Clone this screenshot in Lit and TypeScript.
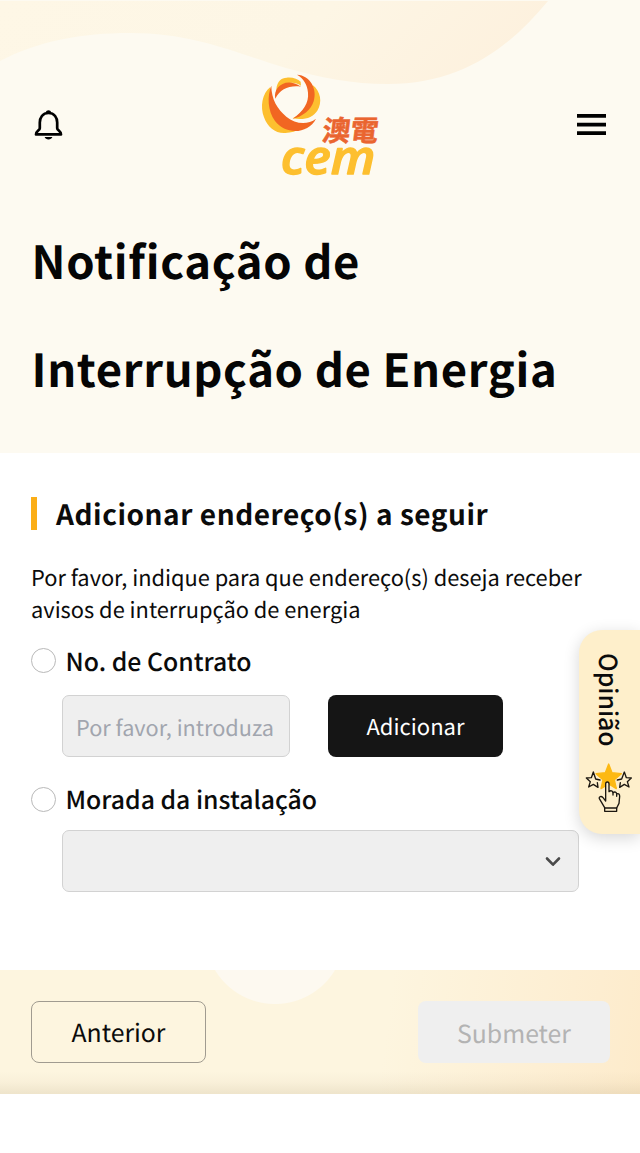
import { LitElement, html, css } from "lit";
import { customElement } from "lit/decorators.js";

@customElement("cem-logo")
class CemLogo extends LitElement {
  static styles = css`
    :host { display: block; width: 140px; height: 120px; }
    svg { display: block; width: 140px; height: 120px; overflow: visible; }
    .han { font: 700 86px/1 "Noto Sans CJK TC", sans-serif; fill: #ea6530; stroke: #ea6530; stroke-width: 1.5; }
    .latin { font: italic 600 142px/1 "Open Sans", "Noto Sans", sans-serif; fill: #fdbf2f; stroke: #fdbf2f; stroke-width: 4; stroke-linejoin: round; }
  `;
  render() {
    return html`<svg viewBox="0 0 420 360" aria-label="CEM">
      <g fill="#fdbf2f">
        <path d="M61 66C36 86 30 125 42 157C53 188 77 206 106 204C123 203 140 198 152 191C112 196 72 164 63 118Z"/>
        <path d="M79 72C82 48 94 38 110 38C128 36 143 42 152 50L153 62C125 44 100 55 79 84Z"/>
        <path d="M188 60C212 78 218 113 202 137C189 157 163 167 128 160C160 145 189 105 188 60Z"/>
      </g>
      <g fill="#f16622">
        <path d="M64 62C51 93 53 137 75 168C106 210 174 208 198 161C173 180 137 178 109 155C83 133 64 103 64 62Z"/>
        <path d="M76 101C68 68 107 34 153 65C119 60 90 72 76 101Z"/>
        <path d="M141 29C181 31 203 73 191 109C184 133 157 157 128 161C160 139 177 113 174 83C172 59 161 40 141 29Z"/>
      </g>
      <text class="han" transform="translate(214 227) skewX(-7)" textLength="168" lengthAdjust="spacingAndGlyphs">澳電</text>
      <text class="latin" x="92" y="326" textLength="284" lengthAdjust="spacingAndGlyphs">cem</text>
    </svg>`;
  }
}

@customElement("opinion-tab")
class OpinionTab extends LitElement {
  static styles = css`
    :host {
      position: absolute; right: 0; top: 630px; width: 61px; height: 204px;
      box-sizing: border-box; padding: 23px 1px 0 0;
      background: #feefcb; border-radius: 23px 0 0 23px;
      box-shadow: 0 4px 16px rgba(0, 0, 0, 0.16);
      display: flex; flex-direction: column; align-items: center;
    }
    .label { writing-mode: vertical-rl; font-size: 24.8px; line-height: 36px; letter-spacing: 0; height: 95px; font-weight: 500; white-space: nowrap; }
    svg { display: block; width: 50px; height: 52px; margin-top: 14px; }
  `;
  render() {
    return html`<span class="label">Opinião</span>
      <svg viewBox="0 0 150 156">
        <path d="M74 6L84 32L112 35L91 53L97 80L74 66L51 80L57 53L36 35L64 32Z" fill="#fdb913" stroke="#fdb913" stroke-width="4" stroke-linejoin="round"/>
        <g fill="#feefcb" stroke="#1c1710" stroke-width="4" stroke-linejoin="round" stroke-linecap="round">
          <path d="M48 54L35 51L28 30L22 47L7 48L19 59L14 75L28 67L42 76L40 62"/>
          <path d="M100 54L113 51L121 30L127 47L142 48L130 59L135 75L121 67L107 76L109 62"/>
          <path d="M65 110V66C65 58 75 58 75 66V89C80 84 86 86 87 92C92 88 98 91 98 96C104 93 107 97 107 103L105 124L98 138V148H62V137L46 110C44 103 52 101 57 107L65 117Z"/>
          <path d="M62 138H98M87 92V99M98 96V103" fill="none"/>
        </g>
      </svg>`;
  }
}

@customElement("app-root")
class AppRoot extends LitElement {
  static styles = css`
    :host {
      display: block; position: relative; width: 640px; height: 1153px; overflow: hidden;
      background: #fff; color: #0b0b0b;
      font-family: "Noto Sans CJK TC", "Noto Sans CJK SC", sans-serif;
      text-rendering: geometricPrecision;
    }
    * { box-sizing: border-box; }
    .hero { height: 453px; background: #fdfaf1; position: relative; }
    .wave { position: absolute; left: 0; top: 0; width: 640px; height: 100px; }
    .bar { position: relative; height: 207px; padding: 65px 34px 0; display: flex; justify-content: space-between; }
    .bell { width: 29px; height: 32px; margin-top: 44px; }
    .menu { width: 29px; height: 22px; margin-top: 49px; }
    .left, .right { width: 216px; }
    .right { display: flex; justify-content: flex-end; }
    h1 { position: relative; margin: 0; padding-left: 31.5px; font-size: 45.4px; line-height: 107.5px; font-weight: 700; letter-spacing: 0.65px; color: #050505; }
    main { padding: 43.5px 31px 0; height: 516.5px; }
    h2 { margin: 0; border-left: 6px solid #fbae17; padding-left: 19px; height: 33px; line-height: 35px; font-size: 28px; font-weight: 700; letter-spacing: 0.55px; white-space: nowrap; }
    p { margin: 32px 0 0; font-size: 21.8px; line-height: 32px; white-space: nowrap; }
    .option { display: flex; align-items: center; gap: 9.5px; height: 26px; font-size: 24.8px; font-weight: 500; }
    .o1 { margin-top: 22px; }
    .o2 { margin-top: 29px; }
    .option span { line-height: 27px; white-space: nowrap; }
    .o1 span { padding-top: 2px; }
    .radio { width: 25px; height: 25px; border: 1.4px solid #b9b9b9; border-radius: 50%; background: #fff; }
    .row { display: flex; gap: 38px; margin: 21.5px 0 0 31px; }
    .field { height: 62px; width: 228px; border: 1px solid #d2d2d2; border-radius: 7px; background: #efefef; color: #a1a5ae; font-size: 21.7px; line-height: 63px; padding-left: 13px; white-space: nowrap; }
    .add { width: 175px; height: 62px; border-radius: 8px; background: #151515; color: #fff; font-size: 22px; line-height: 62px; text-align: center; }
    .select { margin: 18px 0 0 31px; width: 517px; height: 62px; border: 1px solid #d2d2d2; border-radius: 7px; background: #efefef; display: flex; align-items: center; justify-content: flex-end; padding: 2px 17px 0 0; }
    .select svg { width: 16px; height: 12px; }
    footer {
      position: relative; height: 124px; padding: 31.5px 30px 0 31px; display: flex; justify-content: space-between; overflow: hidden;
      background: linear-gradient(to bottom, rgba(170,150,110,0) 101px, rgba(170,150,110,.05) 112px, rgba(170,150,110,.17) 123px),
        radial-gradient(circle at 275px -36px, #fdf9f0 69.5px, rgba(253,249,240,0) 70.5px),
        linear-gradient(97deg, #fdf5df 0, #fdf5df 60%, #fdedd0 92%, #fdebcb 100%);
    }
    .btn { height: 62px; border-radius: 8px; font-size: 24.8px; line-height: 64px; text-align: center; }
    .prev { width: 175px; border: 1.3px solid #a09b90; line-height: 61px; }
    .send { width: 192px; background: #efefef; color: #b3b3b3; }
  `;
  render() {
    return html`
      <section class="hero">
        <svg class="wave" viewBox="0 0 640 100">
          <defs><linearGradient id="g" x1="0" y1="0" x2="1" y2="0.15">
            <stop offset="0" stop-color="#fef7e6"/><stop offset=".6" stop-color="#fdf6e5"/><stop offset="1" stop-color="#fdf1de"/>
          </linearGradient></defs>
          <path fill="url(#g)" d="M0 1V61C38 41 82 33 130 33C195 33 235 53 286 68C322 78 352 84 388 84C462 84 510 47 548 1Z"/>
        </svg>
        <div class="bar">
          <div class="left"><svg class="bell" viewBox="0 0 29 32">
            <path d="M14.5 4C8.5 4 5.8 8.8 5.8 13.5V19.2C5.8 21.4 2 22 2 25.4H27C27 22 23.2 21.4 23.2 19.2V13.5C23.2 8.8 20.5 4 14.5 4Z" fill="none" stroke="#000" stroke-width="2.7" stroke-linejoin="round"/>
            <path d="M11.8 3.5C12.2 .5 16.8 .5 17.2 3.5ZM10.6 28H18.4C17.6 31.2 11.4 31.2 10.6 28Z"/>
          </svg></div>
          <cem-logo></cem-logo>
          <div class="right"><svg class="menu" viewBox="0 0 29 22">
            <path d="M0 0H29V3.8H0ZM0 8.7H29V12.4H0ZM0 17.3H29V21H0Z"/>
          </svg></div>
        </div>
        <h1>Notificação de<br />Interrupção de Energia</h1>
      </section>
      <main>
        <h2>Adicionar endereço(s) a seguir</h2>
        <p>Por favor, indique para que endereço(s) deseja receber<br />avisos de interrupção de energia</p>
        <div class="option o1"><i class="radio"></i><span>No. de Contrato</span></div>
        <div class="row"><div class="field">Por favor, introduza</div><div class="add">Adicionar</div></div>
        <div class="option o2"><i class="radio"></i><span>Morada da instalação</span></div>
        <div class="select"><svg viewBox="0 0 16 12"><path d="M2 2.5L8 8.7L14 2.5" fill="none" stroke="#4a4a4a" stroke-width="2.6" stroke-linecap="round" stroke-linejoin="round"/></svg></div>
      </main>
      <footer><div class="btn prev">Anterior</div><div class="btn send">Submeter</div></footer>
      <opinion-tab></opinion-tab>
    `;
  }
}
